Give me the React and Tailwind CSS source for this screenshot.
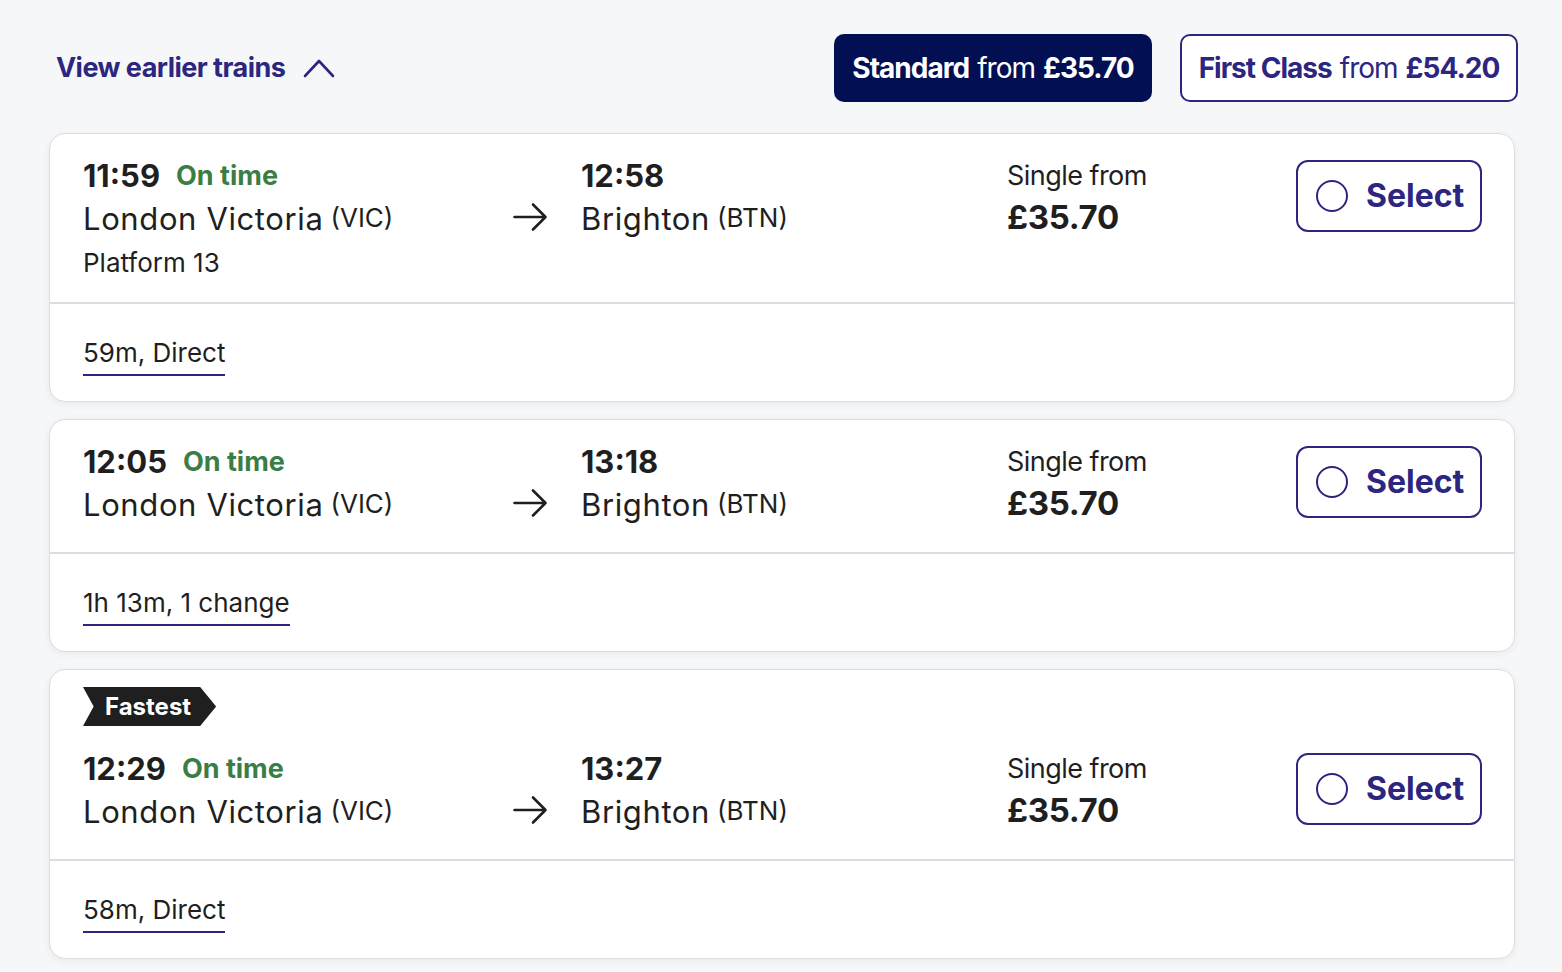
import React from "react";

const INDIGO = "text-[#2c2680]";

function Arrow() {
  return (
    <svg width="35" height="32" viewBox="0 0 35 32" fill="none" className="text-[#1f1f1f]">
      <path d="M1.5 16H32.5M20 3.5L32.5 16L20 28.5" stroke="currentColor" strokeWidth="2.6" strokeLinecap="round" strokeLinejoin="round" />
    </svg>
  );
}

function SelectButton() {
  return (
    <button className="flex items-center h-[72px] w-[186px] rounded-[12px] border-2 border-[#2c2680] bg-white pl-[18px] gap-[18px] shrink-0 mr-[-1px]">
      <span className="w-[32px] h-[32px] rounded-full border-2 border-[#2c2680] shrink-0" />
      <span className={`text-[32px] font-bold ${INDIGO} leading-none`}>Select</span>
    </button>
  );
}

function Card({ dep, arr, platform, duration, fastest }) {
  return (
    <div className="bg-white rounded-[16px] border border-[#dcdce2] shadow-[0_2px_8px_rgba(0,0,0,0.06)] overflow-hidden">
      <div className={`px-[33px] ${fastest ? "pt-[17px]" : "pt-[26px]"} pb-[26px] border-b-2 border-[#dcdce2]`}>
        {fastest && (
          <div className="mb-[27px] flex">
            <div className="bg-[#1f1f1f] text-white font-bold text-[24px] h-[39px] flex items-center pl-[22px] pr-[25px] leading-none [clip-path:polygon(0_0,88%_0,100%_50%,88%_100%,0_100%,8%_50%)]">
              Fastest
            </div>
          </div>
        )}
        <div className="flex items-start">
          <div className="w-[430px] shrink-0">
            <div className="flex items-center h-[30px] gap-[16px]">
              <span className="text-[31px] font-bold text-[#1f1f1f] leading-none">{dep}</span>
              <span className="text-[27px] font-bold text-[#3b7d45] leading-none">On time</span>
            </div>
            <div className="h-[50px] pt-[6px] flex items-center text-[#1f1f1f]">
              <span className="text-[31px] tracking-[0.02em] leading-none">London Victoria</span>
              <span className="text-[26px] ml-[7px] leading-none">(VIC)</span>
            </div>
            {platform && (
              <div className="text-[26px] text-[#1f1f1f] h-[36px] flex items-end leading-none">{platform}</div>
            )}
          </div>
          <div className="w-[68px] shrink-0 h-[80px] flex items-end pb-[7px]">
            <Arrow />
          </div>
          <div className="w-[426px] shrink-0 text-[#1f1f1f]">
            <div className="h-[30px] flex items-center text-[31px] font-bold leading-none">{arr}</div>
            <div className="h-[50px] pt-[6px] flex items-center">
              <span className="text-[31px] tracking-[0.02em] leading-none">Brighton</span>
              <span className="text-[26px] ml-[7px] leading-none">(BTN)</span>
            </div>
          </div>
          <div className="flex-1 text-[#1f1f1f]">
            <div className="h-[30px] flex items-center text-[27px] tracking-[-0.02em] leading-none">Single from</div>
            <div className="h-[50px] pt-[4px] flex items-center text-[33px] font-bold tracking-[-0.01em] leading-none">£35.70</div>
          </div>
          <SelectButton />
        </div>
      </div>
      <div className="px-[33px] pt-[31px] pb-[25px]">
        <span className="inline-block text-[26px] text-[#1f1f1f] leading-[36px] pb-[3px] border-b-2 border-[#2c2680]">{duration}</span>
      </div>
    </div>
  );
}

export default function App() {
  return (
    <div className="min-h-screen bg-[#f6f7f9] font-['Inter',sans-serif] pl-[49px] pr-[47px] pt-[34px] pb-[20px]">
      <div className="flex items-center justify-between ml-[7px] mr-[-3px]">
        <button className="flex items-center gap-[18px]">
          <span className={`text-[27px] font-bold tracking-[-0.02em] ${INDIGO}`}>View earlier trains</span>
          <svg width="32" height="20" viewBox="0 0 32 20" fill="none" className="text-[#2c2680]">
            <path d="M2 18L16 3L30 18" stroke="currentColor" strokeWidth="2.6" strokeLinecap="round" strokeLinejoin="round" />
          </svg>
        </button>
        <div className="flex gap-[28px]">
          <button className="h-[68px] w-[318px] rounded-[10px] bg-[#020f52] text-white text-[28px] tracking-[-0.035em] flex items-center justify-center">
            <span className="font-bold">Standard</span>
            <span className="ml-[8px]">from</span>
            <span className="font-bold ml-[8px]">£35.70</span>
          </button>
          <button className="h-[68px] w-[338px] rounded-[10px] bg-white border-2 border-[#2c2680] text-[#2c2680] text-[28px] tracking-[-0.035em] flex items-center justify-center">
            <span className="font-bold">First Class</span>
            <span className="ml-[8px]">from</span>
            <span className="font-bold ml-[8px]">£54.20</span>
          </button>
        </div>
      </div>
      <div className="mt-[31px] flex flex-col gap-[17px]">
        <Card dep="11:59" arr="12:58" platform="Platform 13" duration="59m, Direct" />
        <Card dep="12:05" arr="13:18" duration="1h 13m, 1 change" />
        <Card dep="12:29" arr="13:27" duration="58m, Direct" fastest />
      </div>
    </div>
  );
}
